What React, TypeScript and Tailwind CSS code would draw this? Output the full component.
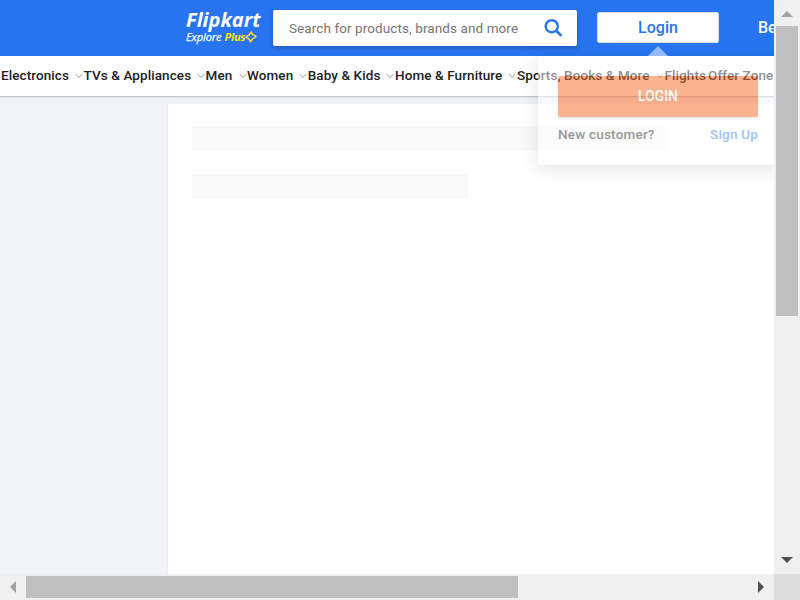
import React from 'react';

const menu = [
  { label: 'Electronics', width: 'w-[82.5px]', caret: true },
  { label: 'TVs & Appliances', width: 'w-[122px]', caret: true },
  { label: 'Men', width: 'w-[41.5px]', caret: true },
  { label: 'Women', width: 'w-[60.7px]', caret: true },
  { label: 'Baby & Kids', width: 'w-[87.3px]', caret: true },
  { label: 'Home & Furniture', width: 'w-[122px]', caret: true },
  { label: 'Sports, Books & More', width: 'w-[147.5px]', caret: true },
  { label: 'Flights', width: 'w-[43.5px]', caret: false },
  { label: 'Offer Zone', width: 'w-[67px]', caret: false },
];

function Caret() {
  return (
    <svg className="mr-[0.5px]" width="8" height="6" viewBox="0 0 8 6" fill="none" stroke="#c2c2c2" strokeWidth="1.2">
      <path d="M0.6 0.8 L4 4.5 L7.4 0.8" />
    </svg>
  );
}

function Logo() {
  return (
    <div className="ml-[186px] mt-[8px] w-[87px] shrink-0 font-['Open_Sans',sans-serif] italic text-white">
      <div className="h-[23px] whitespace-nowrap text-[20px] font-bold leading-[23px] tracking-[0.02px]">Flipkart</div>
      <div className="flex h-[12px] items-center whitespace-nowrap text-[11px] leading-[12px] tracking-[-0.1px]">
        <span className="[-webkit-text-stroke:0.25px_white]">Explore</span>
        <span className="ml-[3px] font-bold tracking-[-0.25px] text-[#ffe500]">Plus</span>
        <svg width="12" height="12" viewBox="0 0 12 12" fill="none" stroke="#f0dc30" strokeWidth="1.5" strokeLinejoin="round">
          <path d="M6.2 1 L7.8 3.7 Q9.2 4.1 10.9 5.4 Q9.6 6.8 8.1 7.6 L5.4 10.7 L4 7.9 Q2.5 7.4 1 6.4 Q2.4 4.8 4 4 Z" />
        </svg>
      </div>
    </div>
  );
}

function LoginMenu() {
  return (
    <div className="absolute left-[538px] top-[46px] w-[240px] opacity-50">
      <svg className="mx-auto block" width="20" height="10" viewBox="0 0 20 10">
        <path d="M0 10 L10 0 L20 10 Z" fill="#fff" />
      </svg>
      <div className="h-[109px] rounded-[2px] bg-white px-[20px] pt-[20px] shadow-[0_4px_16px_0_rgba(0,0,0,0.2)]">
        <div className="flex h-[41px] w-[200px] items-center justify-center rounded-[2px] bg-[#fb6a24] text-[13.8px] font-medium tracking-[0.05px] text-white shadow-[0_1px_2px_0_rgba(0,0,0,0.2)]">
          LOGIN
        </div>
        <div className="flex justify-between pt-[7px] text-[13.5px] font-medium leading-[20px]">
          <span className="tracking-[0.2px] text-[#333333]">New customer?</span>
          <span className="tracking-[0.2px] text-[#3f83f2]">Sign Up</span>
        </div>
      </div>
    </div>
  );
}

export default function App() {
  return (
    <div className="grid h-[600px] w-[800px] grid-cols-[774px_26px] grid-rows-[574px_26px] overflow-hidden bg-[#f0f0f0] font-['Roboto',sans-serif]">
      <div className="relative overflow-hidden bg-[#f1f3f6]">
        <header className="flex h-[56px] items-start bg-[#2874f0]">
          <Logo />
          <div className="mt-[10px] flex h-[36px] w-[304px] shrink-0 items-center rounded-[2px] bg-white pl-[16px] pr-[13px] shadow-[0_2px_4px_0_rgba(0,0,0,0.23)]">
            <span className="flex-1 whitespace-nowrap text-[13.5px] tracking-[0.09px] text-[#757575]">Search for products, brands and more</span>
            <svg className="mt-[1px]" width="20" height="20" viewBox="0 0 17 18">
              <g fill="#2874F1" fillRule="evenodd">
                <path d="m11.618 9.897l4.225 4.212c.092.092.101.232.02.313l-1.465 1.46c-.081.081-.221.072-.314-.02l-4.216-4.203" />
                <path d="m6.486 10.901c-2.42 0-4.381-1.956-4.381-4.368 0-2.413 1.961-4.369 4.381-4.369 2.42 0 4.381 1.956 4.381 4.369 0 2.413-1.961 4.368-4.381 4.368m0-10.835c-3.582 0-6.486 2.895-6.486 6.467 0 3.572 2.904 6.467 6.486 6.467 3.582 0 6.486-2.895 6.486-6.467 0-3.572-2.904-6.467-6.486-6.467" />
              </g>
            </svg>
          </div>
          <div className="ml-[20px] mt-[12px] flex h-[31px] w-[122px] shrink-0 items-center justify-center rounded-[2px] border border-[#dbdbdb] bg-white text-[16px] font-medium text-[#2874f0]">
            Login
          </div>
          <span className="ml-[39px] mt-[16px] whitespace-nowrap text-[16px] font-medium leading-[24px] text-white">Become a Seller</span>
        </header>
        <nav className="flex h-[41px] border-b border-[#c4c6c9] bg-white pl-[1px] text-[13.5px] font-medium tracking-[0.09px] text-[#212121] shadow-[0_1px_1px_0_rgba(0,0,0,0.06)]">
          {menu.map((item) => (
            <div key={item.label} className={`flex h-[39px] shrink-0 items-center justify-between whitespace-nowrap ${item.width}`}>
              <span>{item.label}</span>
              {item.caret && <Caret />}
            </div>
          ))}
        </nav>
        <main className="ml-[168px] mt-[7px] h-[480px] rounded-[2px] bg-white px-[24px] pt-[22px] shadow-[0_1px_2px_0_rgba(0,0,0,0.1)]">
          <div className="h-[24px] w-[476px] bg-[#f9f9f9]" />
          <div className="mt-[24px] h-[24px] w-[276px] bg-[#f9f9f9]" />
        </main>
        <LoginMenu />
      </div>
      <div className="flex flex-col items-center bg-[#f0f0f0]">
        <svg width="26" height="26" viewBox="0 0 26 26"><path d="M7 17 L13 11 L19 17 Z" fill="#a3a3a3" /></svg>
        <div className="h-[290px] w-[22px] bg-[#c0c0c0]" />
        <svg className="mt-auto" width="26" height="26" viewBox="0 0 26 26"><path d="M7 9 L19 9 L13 15 Z" fill="#505050" /></svg>
      </div>
      <div className="flex items-center bg-[#f0f0f0]">
        <svg width="26" height="26" viewBox="0 0 26 26"><path d="M16 7 L16 19 L10 13 Z" fill="#a3a3a3" /></svg>
        <div className="h-[22px] w-[492px] bg-[#c0c0c0]" />
        <svg className="ml-auto" width="26" height="26" viewBox="0 0 26 26"><path d="M10 7 L10 19 L16 13 Z" fill="#505050" /></svg>
      </div>
      <div className="bg-[#dcdcdc]" />
    </div>
  );
}
